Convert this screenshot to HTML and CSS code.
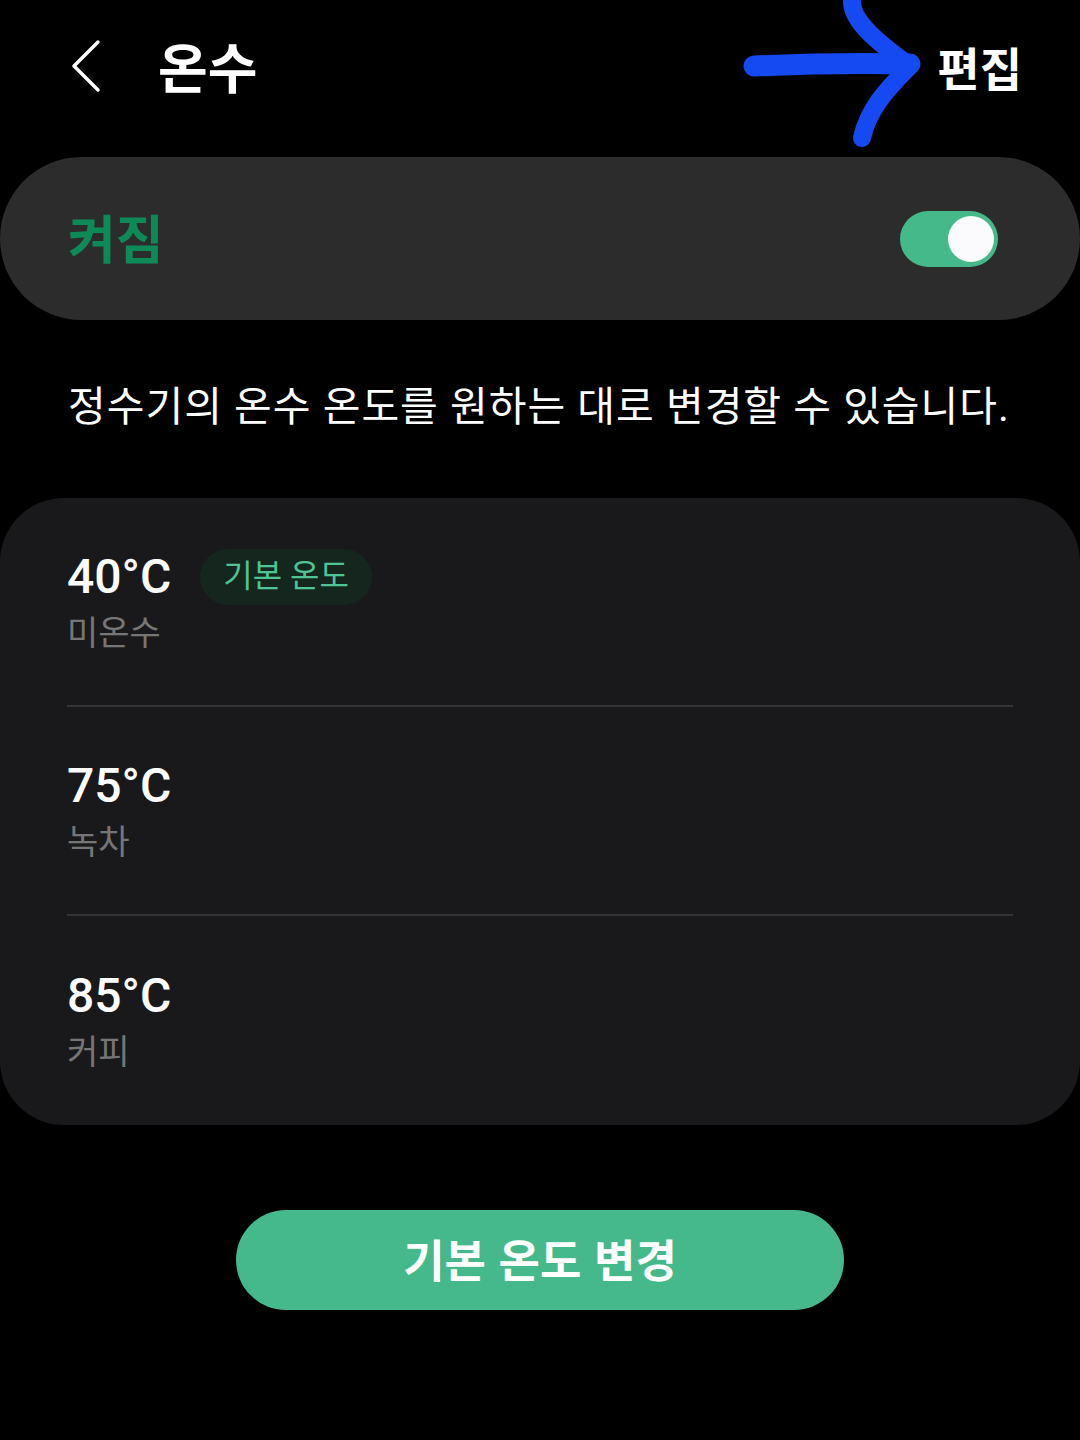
FILE: index.html
```html
<!DOCTYPE html>
<html lang="ko">
<head>
    <meta charset="UTF-8">
    <title>온수</title>
    <link rel="stylesheet" href="styles.css">
</head>
<body>
    <div class="screen">
        <header class="topbar">
            <button class="back" aria-label="뒤로">
                <svg width="32" height="54" viewBox="0 0 32 54">
                    <path d="M28 3 L4 27 L28 51" fill="none" stroke="#fff" stroke-width="3.5" stroke-linecap="round" stroke-linejoin="round"/>
                </svg>
            </button>
            <h1 class="title">온수</h1>
            <span class="edit">편집</span>
            <!-- 손으로 그린 화살표 표시 -->
            <svg class="mark" width="200" height="150" viewBox="0 0 200 150">
                <g fill="none" stroke="#1549f2" stroke-linecap="round" stroke-linejoin="round">
                    <path d="M14 66 C60 64 120 63 170 64" stroke-width="21"/>
                    <path d="M112 2 C112 22 140 44 170 66" stroke-width="18"/>
                    <path d="M168 68 C146 90 128 110 122 138" stroke-width="18"/>
                </g>
            </svg>
        </header>

        <section class="power">
            <span class="power-label">켜짐</span>
            <span class="switch"><span class="knob"></span></span>
        </section>

        <p class="desc">정수기의 온수 온도를 원하는 대로 변경할 수 있습니다.</p>

        <section class="temps">
            <div class="temp-row">
                <div class="temp-head">
                    <span class="temp">40°C</span>
                    <span class="badge">기본 온도</span>
                </div>
                <div class="temp-sub">미온수</div>
            </div>
            <div class="temp-row">
                <div class="temp-head">
                    <span class="temp">75°C</span>
                </div>
                <div class="temp-sub">녹차</div>
            </div>
            <div class="temp-row">
                <div class="temp-head">
                    <span class="temp">85°C</span>
                </div>
                <div class="temp-sub">커피</div>
            </div>
        </section>

        <div class="actions">
            <button class="primary">기본 온도 변경</button>
        </div>
    </div>
</body>
</html>
```

FILE: styles.css
```css
html, body {
    margin: 0;
    background: #000;
}
body {
    font-family: Roboto, "Noto Sans CJK KR", sans-serif;
    color: #fff;
    width: 1080px;
    height: 1440px;
    overflow: hidden;
}
.screen {
    display: flex;
    flex-direction: column;
}
.topbar {
    position: relative;
    height: 157px;
    display: flex;
    align-items: center;
    padding: 0 58px 0 70px;
    box-sizing: border-box;
}
.back {
    background: none;
    border: none;
    padding: 0;
    width: 32px;
    height: 54px;
    margin-top: -26px;
}
.back svg {
    display: block;
}
.title {
    margin: -26px 0 0 56px;
    font-size: 54px;
    font-weight: 700;
    flex: 1;
}
.edit {
    font-size: 46px;
    font-weight: 700;
    margin-top: -26px;
    position: relative;
    z-index: 1;
}
.mark {
    position: absolute;
    left: 740px;
    top: 0;
}
.power {
    height: 163px;
    background: #2c2c2c;
    border-radius: 82px;
    display: flex;
    align-items: center;
    justify-content: space-between;
    padding: 0 82px 0 68px;
}
.power-label {
    font-size: 52px;
    font-weight: 700;
    color: #0e8a58;
    margin-top: -4px;
}
.switch {
    width: 98px;
    height: 56px;
    border-radius: 28px;
    background: #45b98a;
    display: flex;
    align-items: center;
    justify-content: flex-end;
    padding: 0 4px;
    box-sizing: border-box;
}
.knob {
    width: 46px;
    height: 46px;
    border-radius: 50%;
    background: #fbfbfd;
}
.desc {
    margin: 58px 0 0 68px;
    height: 120px;
    font-size: 41px;
    line-height: 58px;
    letter-spacing: 1px;
}
.temps {
    background: #19191b;
    border-radius: 64px;
    padding: 0 67px;
}
.temp-row {
    height: 209px;
    display: flex;
    flex-direction: column;
    justify-content: center;
    border-bottom: 2px solid #343436;
    box-sizing: border-box;
}
.temp-row:last-child {
    border-bottom: none;
}
.temp-head {
    display: flex;
    align-items: center;
    gap: 29px;
    height: 58px;
}
.temp {
    font-size: 48px;
    font-weight: 500;
}
.badge {
    background: #15261f;
    color: #4fc394;
    font-size: 32px;
    padding: 0 23px;
    height: 56px;
    line-height: 54px;
    border-radius: 28px;
}
.temp-sub {
    font-size: 34px;
    color: #767676;
    margin-top: 4px;
    line-height: 46px;
}
.actions {
    display: flex;
    justify-content: center;
    padding-top: 85px;
}
.primary {
    width: 608px;
    height: 100px;
    border: none;
    border-radius: 50px;
    background: #46b98c;
    color: #fff;
    font-family: "Noto Sans CJK KR", sans-serif;
    font-size: 45px;
    font-weight: 700;
    padding-bottom: 4px;
}
```
